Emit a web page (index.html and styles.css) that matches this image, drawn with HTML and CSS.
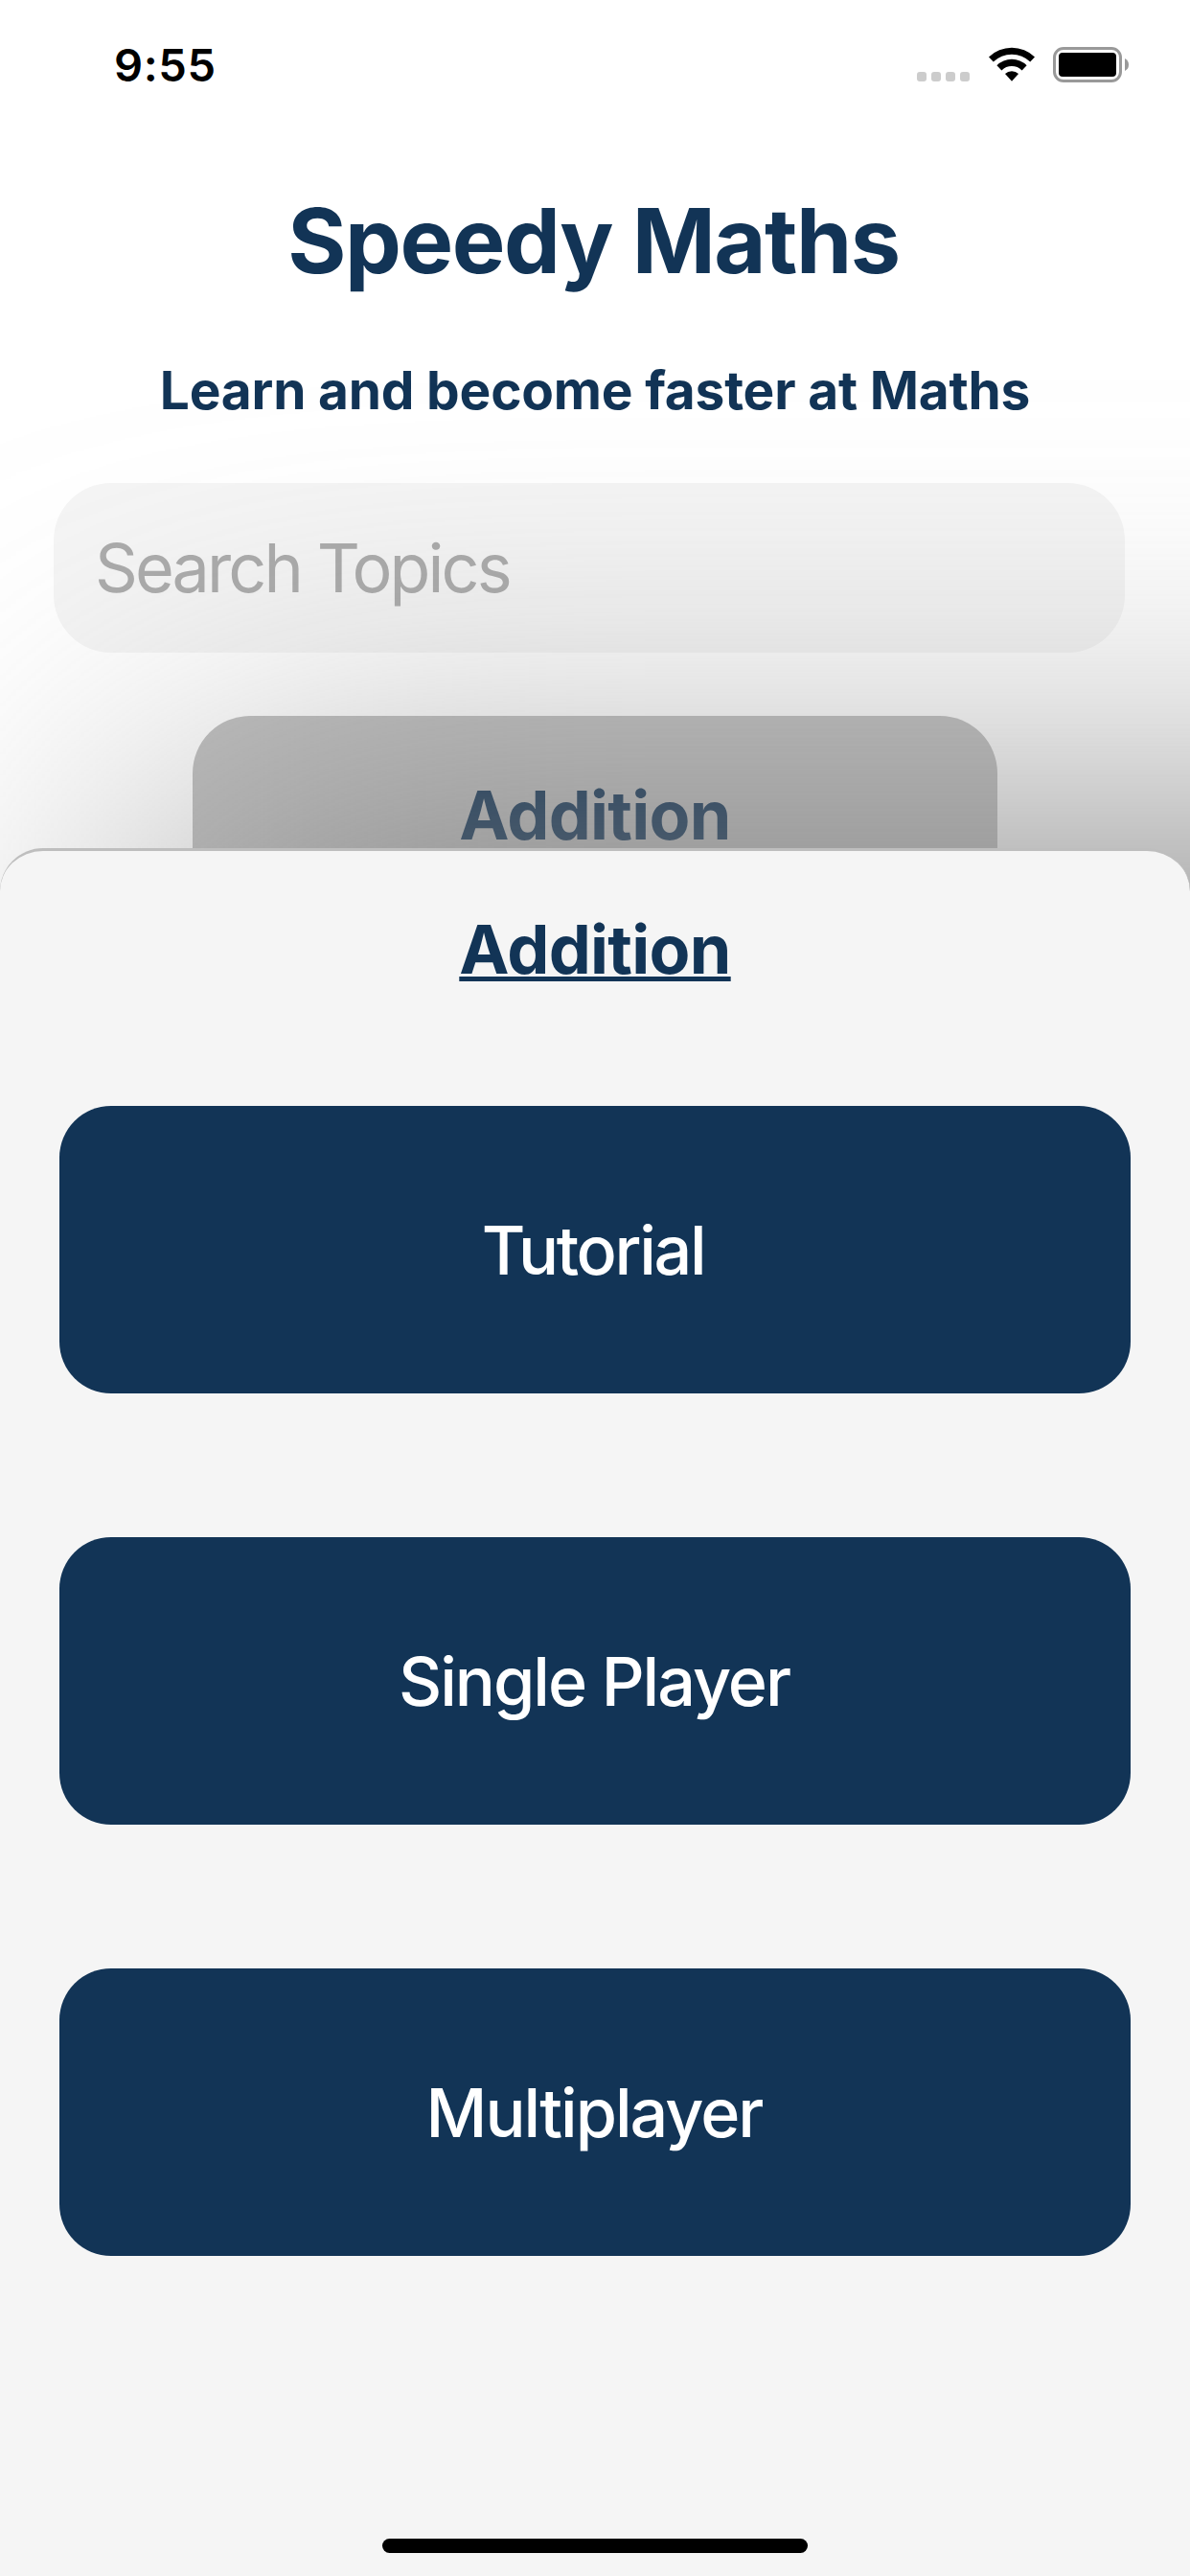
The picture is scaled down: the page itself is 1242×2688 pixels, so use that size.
FILE: index.html
```html
<!DOCTYPE html>
<html lang="en">
<head>
<meta charset="utf-8">
<title>Speedy Maths</title>
<link rel="stylesheet" href="styles.css">
</head>
<body>
<div class="screen">
  <header class="status">
    <span class="time">9:55</span>
    <div class="status-icons">
      <svg class="signal" width="55" height="10" viewBox="0 0 55 10" fill="#cccccc"><rect width="10" height="10" rx="3"/><rect x="15" width="10" height="10" rx="3"/><rect x="30" width="10" height="10" rx="3"/><rect x="45" width="10" height="10" rx="3"/></svg>
      <svg class="wifi" width="48" height="37" viewBox="0 0 48 37"><path d="M0 10.5A34.5 34.5 0 0 1 48 10.5L43.2 15.5A27.5 27.5 0 0 0 4.8 15.5Z"/><path d="M8.4 19.2A22.3 22.3 0 0 1 39.6 19.2L34.6 24.4A15.2 15.2 0 0 0 13.4 24.4Z"/><path d="M17 28A10 10 0 0 1 31 28L24 35.8Z"/></svg>
      <svg class="battery" width="80" height="37" viewBox="0 0 80 37"><rect x="1.5" y="1.5" width="69" height="34" rx="9.5" fill="none" stroke="#999999" stroke-width="3"/><rect x="6" y="6" width="60" height="25" rx="4"/><path d="M75 12Q79 14 79 18.5T75 25Z" fill="#999999"/></svg>
    </div>
  </header>
  <main class="home">
    <h1 class="title">Speedy Maths</h1>
    <p class="subtitle">Learn and become faster at Maths</p>
    <div class="search">Search Topics</div>
    <div class="topic">Addition</div>
  </main>
  <section class="sheet">
    <div class="panel">
      <h2 class="panel-title">Addition</h2>
      <button class="mode tutorial">Tutorial</button>
      <button class="mode single">Single Player</button>
      <button class="mode multi">Multiplayer</button>
      <div class="home-bar"></div>
    </div>
  </section>
</div>
</body>
</html>
```

FILE: styles.css
```css
* { box-sizing: border-box; margin: 0; }
body { background: #ffffff; font-family: Inter, "Liberation Sans", sans-serif; color: #123456; }
.screen { width: 1242px; height: 2688px; overflow: hidden; display: flex; flex-direction: column; }
.status { height: 132px; flex: none; padding: 49px 63px 0 119px; display: flex; justify-content: space-between; align-items: flex-start; color: #000000; }
.time { font-size: 47px; line-height: 38px; font-weight: 570; letter-spacing: 0.6px; }
.status-icons { display: flex; align-items: flex-start; }
.signal { margin: 26px 20px 0 0; }
.wifi { margin-right: 19px; }
.home { height: 753px; flex: none; display: flex; flex-direction: column; align-items: center; }
.title { margin-top: 61px; padding-right: 3px; font-size: 93.5px; line-height: 116px; font-weight: 700; letter-spacing: -1.5px; white-space: nowrap; }
.subtitle { margin-top: 63px; font-size: 55px; line-height: 70px; font-weight: 700; letter-spacing: -0.2px; white-space: nowrap; }
.search { align-self: flex-start; margin: 62px 0 0 56px; width: 1118px; height: 177px; border-radius: 60px; background: #f5f5f5; padding-left: 43px; font-size: 70px; line-height: 177px; letter-spacing: -2.9px; color: #ababab; }
.topic { margin-top: 66px; width: 840px; height: 138px; padding-top: 60px; border-radius: 60px 60px 0 0; background: #bfbfbf; text-align: center; font-size: 70px; line-height: 88px; font-weight: 700; letter-spacing: -0.7px; }
.sheet { position: relative; flex: 1; }
.sheet::before { content: ""; position: absolute; inset: 0 -900px 0 180px; background: #808080; filter: blur(204px); }
.panel { position: relative; height: 100%; border-top: 3px solid #bebebe; border-radius: 45px 45px 0 0; background: #f5f5f5; display: flex; flex-direction: column; align-items: center; padding-top: 59px; }
.panel-title { height: 88px; margin-bottom: 119px; font-size: 70px; line-height: 88px; font-weight: 700; letter-spacing: -0.7px; text-decoration: underline; text-decoration-thickness: 5px; text-underline-offset: 3px; text-decoration-skip-ink: none; }
.mode { width: 1118px; height: 300px; margin: 0 0 150px; padding: 2px 2px 0 0; border: 0; border-radius: 54px; background: #123456; color: #ffffff; font: 500 70px/88px Inter, "Liberation Sans", sans-serif; }
.tutorial { padding-right: 4px; letter-spacing: -2.3px; }
.single { letter-spacing: -2px; }
.multi { letter-spacing: -2px; }
.home-bar { width: 444px; height: 15px; margin-top: 145px; border-radius: 8px; background: #000000; }
```
